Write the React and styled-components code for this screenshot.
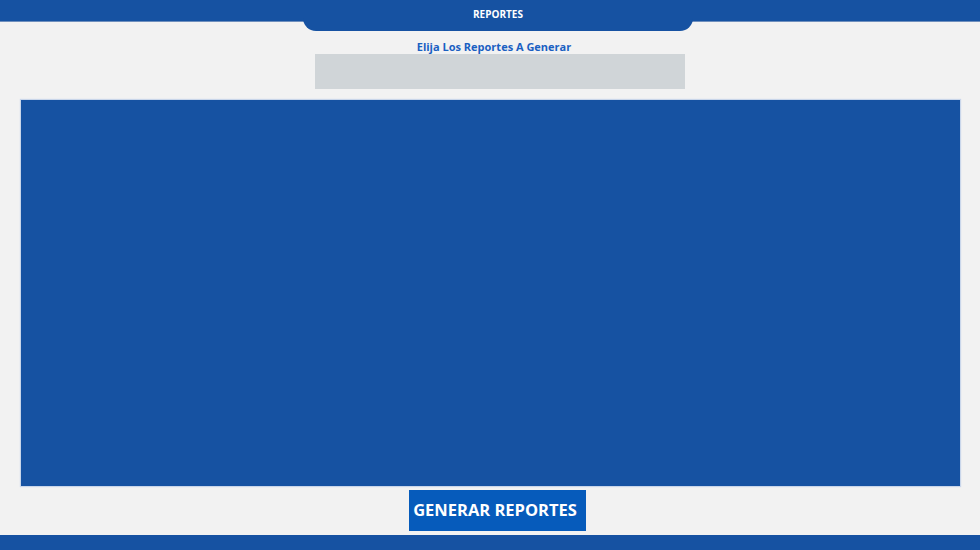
import styled, { createGlobalStyle } from "styled-components";

const GlobalStyle = createGlobalStyle`
  html, body {
    margin: 0;
    padding: 0;
    background: #f2f2f2;
    font-family: "Open Sans", "Liberation Sans", sans-serif;
  }
`;

const Page = styled.div`
  display: flex;
  flex-direction: column;
  height: 550px;
  overflow: hidden;
`;

const TopBar = styled.header`
  height: 22px;
  background: #1652a2;
  display: flex;
  justify-content: center;
  align-items: flex-start;
  padding-left: 16px;
  border-bottom: 1px solid #6f8fbd;
  box-sizing: border-box;
`;

const Tab = styled.div`
  width: 390px;
  height: 31px;
  flex-shrink: 0;
  background: #1652a2;
  border-radius: 0 0 13px 13px;
  color: #fff;
  font-size: 10px;
  font-weight: 700;
  display: flex;
  justify-content: center;
  padding-top: 7px;
  box-sizing: border-box;
`;

const Selector = styled.section`
  display: flex;
  flex-direction: column;
  align-items: center;
  margin-top: 18px;
  padding-left: 20px;
`;

const Subtitle = styled.h2`
  margin: 0 0 0 -12px;
  font-size: 11px;
  line-height: 14px;
  font-weight: 700;
  color: #1a60c2;
`;

const ReportBox = styled.div`
  width: 370px;
  height: 35px;
  background: #d0d5d8;
`;

const Panel = styled.main`
  margin: 11px 20px 0 21px;
  height: 386px;
  background: #1652a2;
  box-shadow: 0 0 1px 1px #c9d6ea;
`;

const Actions = styled.div`
  display: flex;
  justify-content: center;
  margin-top: 4px;
  padding-left: 15px;
`;

const GenerateButton = styled.button`
  width: 177px;
  height: 41px;
  border: none;
  background: #065bbb;
  color: #fff;
  font-family: inherit;
  font-size: 16.5px;
  font-weight: 700;
  padding: 0 5px 3px 0;
  cursor: pointer;
`;

const BottomBar = styled.footer`
  margin-top: auto;
  height: 15px;
  background: #1652a2;
`;

export default function App() {
  return (
    <>
      <GlobalStyle />
      <Page>
        <TopBar>
          <Tab>REPORTES</Tab>
        </TopBar>
        <Selector>
          <Subtitle>Elija Los Reportes A Generar</Subtitle>
          <ReportBox />
        </Selector>
        <Panel />
        <Actions>
          <GenerateButton>GENERAR REPORTES</GenerateButton>
        </Actions>
        <BottomBar />
      </Page>
    </>
  );
}
